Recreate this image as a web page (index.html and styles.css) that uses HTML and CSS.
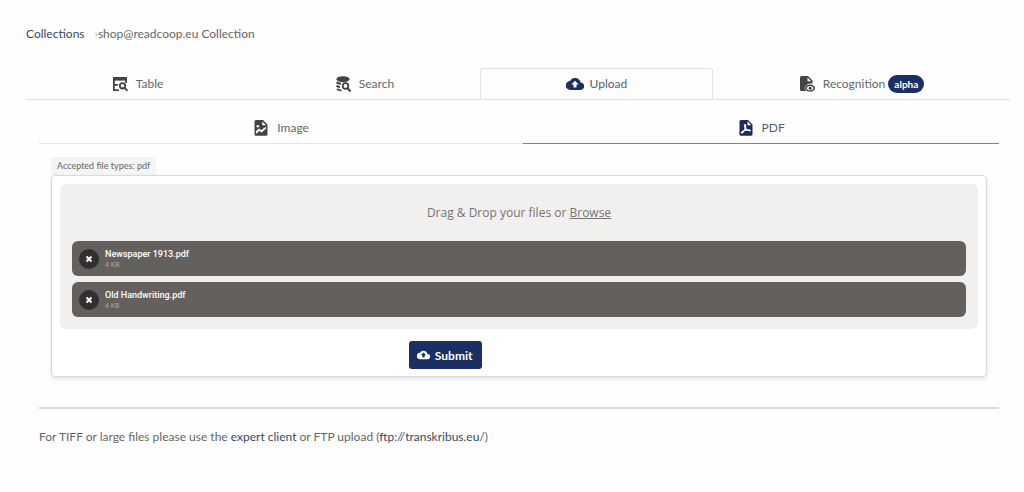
FILE: index.html
```html
<!DOCTYPE html>
<html lang="en">
<head>
    <meta charset="UTF-8">
    <meta name="viewport" content="width=device-width, initial-scale=1.0">
    <title>Upload - Collection</title>
    <link rel="stylesheet" href="styles.css">
</head>
<body>

    <!-- Breadcrumb -->
    <nav class="breadcrumb">
        <a href="#">Collections</a>
        <span class="separator">›</span>
        <span>shop@readcoop.eu Collection</span>
    </nav>

    <!-- Main tabs -->
    <nav class="tabs">
        <a href="#" class="tab">
            <svg class="icon" viewBox="0 0 16 16" fill="none" stroke="currentColor" stroke-width="1.800">
                <path d="M1 2.800h14" stroke-width="3.600" />
                <path d="M1.900 2v12.100h5M2 8.800h4M14.100 3v4" />
                <circle cx="10.500" cy="9.800" r="2.700" />
                <path d="M12.500 11.700l3 3.300" />
            </svg>
            <span>Table</span>
        </a>
        <a href="#" class="tab">
            <svg class="icon" viewBox="0 0 16 16" fill="none" stroke="currentColor" stroke-width="2">
                <ellipse cx="8" cy="3.200" rx="6.500" ry="3" fill="currentColor" stroke="none" />
                <path d="M1.500 6.300c1 1 2.500 1.400 4.500 1.500M1.500 9.700c.8.700 2 1 3.500 1.200M2 12.900c1 1 2.500 1.500 4.500 1.600" />
                <circle cx="10.500" cy="10" r="2.800" stroke-width="1.800" />
                <path d="M12.500 12l3 3.500" />
            </svg>
            <span>Search</span>
        </a>
        <a href="#" class="tab active">
            <svg class="icon icon-cloud" viewBox="0 0 24 18" fill="currentColor">
                <path fill-rule="evenodd" d="M19.400 7A7.500 7.500 0 0 0 5.400 5 6 6 0 0 0 6 17h13a5 5 0 0 0 .4-10zM14 9.500v4h-4v-4H7l5-5 5 5z" />
            </svg>
            <span>Upload</span>
        </a>
        <a href="#" class="tab">
            <svg class="icon" viewBox="0 0 16 16" fill="currentColor">
                <path fill-rule="evenodd" d="M2.500 0H9l4.500 4.500v3.300C10 6.800 7 8.800 5.500 12c.4 1.200 1 2.200 1.800 3H2.500A1.500 1.500 0 0 1 1 13.500v-12A1.500 1.500 0 0 1 2.500 0zM8.500 1.500v3.700h3.700z" />
                <path d="M6.700 12.200c.9-1.900 2.600-2.900 4.500-2.900s3.500 1 4.300 2.900c-.8 1.900-2.400 2.900-4.300 2.900s-3.600-1-4.500-2.900z" fill="none" stroke="currentColor" stroke-width="1.400" />
                <circle cx="11.200" cy="12.200" r="1.500" />
            </svg>
            <span>Recognition</span>
            <span class="badge">alpha</span>
        </a>
    </nav>

    <main class="content">
        <!-- File type tabs -->
        <nav class="subtabs">
            <a href="#" class="subtab">
                <svg class="icon" viewBox="0 0 16 16" fill="currentColor">
                    <path d="M3 0h7l4.500 4.500v9.700a1.500 1.500 0 0 1-1.500 1.500H3a1.500 1.500 0 0 1-1.500-1.500V1.500A1.500 1.500 0 0 1 3 0z" />
                    <path d="M9.300 1.500v3.700H13zM3 13.800V11l3-2.500 2 1.700L13 6.800v2L8.500 12.500 6.500 11z" fill="#fff" />
                    <circle cx="4.800" cy="6.300" r="1.300" fill="#fff" />
                </svg>
                <span>Image</span>
            </a>
            <a href="#" class="subtab active">
                <svg class="icon" viewBox="0 0 16 16" fill="currentColor">
                    <path d="M3 0h7l4.500 4.500v9.700a1.500 1.500 0 0 1-1.500 1.500H3a1.500 1.500 0 0 1-1.500-1.500V1.500A1.500 1.500 0 0 1 3 0z" />
                    <path d="M9.500 1.300v3.900h3.700z" fill="#fff" />
                    <path d="M7 4.500c-.8 0-.6 2 .2 3.800C6.300 10.800 4.800 13.200 3.800 13c-1-.4.800-2.400 4-2.900 2.400-.5 4.500-.2 4.500.4 0 .9-3-.1-4.800-2.200C7.700 6.500 7.900 4.600 7 4.500z" fill="none" stroke="#fff" stroke-width="1.200" />
                </svg>
                <span>PDF</span>
            </a>
        </nav>

        <!-- Upload form -->
        <form class="upload">
            <div class="file-types">Accepted file types: pdf</div>
            <div class="card">
                <div class="dropzone">
                    <p class="drop-label">Drag &amp; Drop your files or <a href="#">Browse</a></p>
                    <ul class="file-list">
                        <li class="file">
                            <button type="button" class="remove-btn" aria-label="Remove Newspaper 1913.pdf">
                                <svg viewBox="0 0 8 8"><path d="M1.500 1.500l5 5M6.500 1.500l-5 5" /></svg>
                            </button>
                            <div class="file-info">
                                <span class="file-name">Newspaper 1913.pdf</span>
                                <span class="file-size">4 KB</span>
                            </div>
                        </li>
                        <li class="file">
                            <button type="button" class="remove-btn" aria-label="Remove Old Handwriting.pdf">
                                <svg viewBox="0 0 8 8"><path d="M1.500 1.500l5 5M6.500 1.500l-5 5" /></svg>
                            </button>
                            <div class="file-info">
                                <span class="file-name">Old Handwriting.pdf</span>
                                <span class="file-size">4 KB</span>
                            </div>
                        </li>
                    </ul>
                </div>
                <div class="actions">
                    <button type="submit" class="submit-btn">
                        <svg viewBox="0 0 24 18" fill="currentColor">
                            <path fill-rule="evenodd" d="M19.400 7A7.500 7.500 0 0 0 5.400 5 6 6 0 0 0 6 17h13a5 5 0 0 0 .4-10zM14 9.500v4h-4v-4H7l5-5 5 5z" />
                        </svg>
                        <span>Submit</span>
                    </button>
                </div>
            </div>
        </form>

        <p class="note">For TIFF or large files please use the <a href="#">expert client</a> or FTP upload (<a href="#">ftp://transkribus.eu/</a>)</p>
    </main>

</body>
</html>
```

FILE: styles.css
```css
body {
    margin: 0;
    padding: 24px 14px 24px 26px;
    font-family: Lato, sans-serif;
    font-size: 12px;
    line-height: 20px;
    color: #666668;
    background-color: #fefefe;
}

a {
    color: #3a4868;
    text-decoration: none;
}

/* Breadcrumb */
.breadcrumb {
    display: flex;
}

.breadcrumb .separator {
    margin-left: 10px;
    color: #b5b5b5;
}

/* Main tabs */
.tabs {
    display: flex;
    margin-top: 24px;
    border-bottom: 1px solid #e2e2e4;
}

.tab,
.subtab {
    display: flex;
    flex: 1 1 auto;
    align-items: center;
    justify-content: center;
    color: #666668;
}

.tab {
    height: 30px;
    border: 1px solid transparent;
    border-bottom: none;
    border-radius: 3px 3px 0 0;
}

.tab.active {
    border-color: #e2e2e4;
    color: #535d72;
}

.icon {
    width: 16px;
    height: 16px;
    margin-right: 8px;
    color: #444446;
}

.icon-cloud {
    width: 18px;
    height: 14px;
    margin-right: 6px;
}

.active .icon {
    color: #1b2c5f;
}

.badge {
    margin-left: 3px;
    padding: 0 6px;
    border-radius: 9px;
    background-color: #1b2f63;
    color: #fff;
    font-size: 10px;
    font-weight: bold;
    line-height: 18px;
}

/* Image / PDF tabs */
.content {
    padding: 12px 11px 0 13px;
}

.subtabs {
    display: flex;
}

.subtab {
    height: 31px;
    border-bottom: 1px solid #e6e6e8;
}

.subtab.active {
    border-bottom-color: #80828f;
    color: #535d72;
}

/* Upload form */
.upload {
    padding: 13px 12px 30px;
    border-bottom: 2px solid #dcdcde;
}

.file-types {
    width: fit-content;
    padding: 0 6px;
    background-color: #f5f5f5;
    font-size: 9px;
    line-height: 18px;
}

.card {
    padding: 8px 8px 7px;
    border: 1px solid #dadadc;
    border-radius: 4px;
    background-color: #fff;
    box-shadow: 0 2px 4px rgba(0, 0, 0, 0.1);
}

.dropzone {
    padding: 0 12px 12px;
    border-radius: 6px;
    background-color: #f1f0ef;
    font-family: "Open Sans", sans-serif;
}

.drop-label {
    margin: 0;
    color: #757474;
    line-height: 57px;
    text-align: center;
}

.drop-label a {
    color: #757474;
    text-decoration: underline;
}

.file-list {
    display: grid;
    gap: 6px;
    margin: 0;
    padding: 0;
    list-style: none;
}

.file {
    display: flex;
    align-items: center;
    height: 35px;
    padding-left: 7px;
    border-radius: 6px;
    background-color: #64605e;
    color: #fff;
}

.remove-btn {
    display: flex;
    align-items: center;
    justify-content: center;
    width: 20px;
    height: 20px;
    padding: 0;
    border: none;
    border-radius: 50%;
    background-color: #322f2e;
    cursor: pointer;
}

.remove-btn svg {
    width: 8px;
    height: 8px;
    stroke: #fff;
    stroke-width: 2;
}

.file-info {
    display: flex;
    flex-direction: column;
    margin-left: 6px;
}

.file-name {
    font-family: Roboto, sans-serif;
    font-size: 9px;
    font-weight: 500;
    line-height: 11px;
}

.file-size {
    color: #b0aeac;
    font-size: 7px;
    line-height: 9px;
}

.actions {
    padding: 12px 0 0 38%;
}

.submit-btn {
    display: flex;
    align-items: center;
    height: 28px;
    padding: 0 10px 0 8px;
    border: none;
    border-radius: 3px;
    background-color: #1b2f63;
    color: #fff;
    font-family: Lato, sans-serif;
    font-size: 12px;
    font-weight: bold;
    cursor: pointer;
}

.submit-btn svg {
    width: 13px;
    height: 10px;
    margin-right: 5px;
}

.note {
    margin: 18px 0 0;
}
```
